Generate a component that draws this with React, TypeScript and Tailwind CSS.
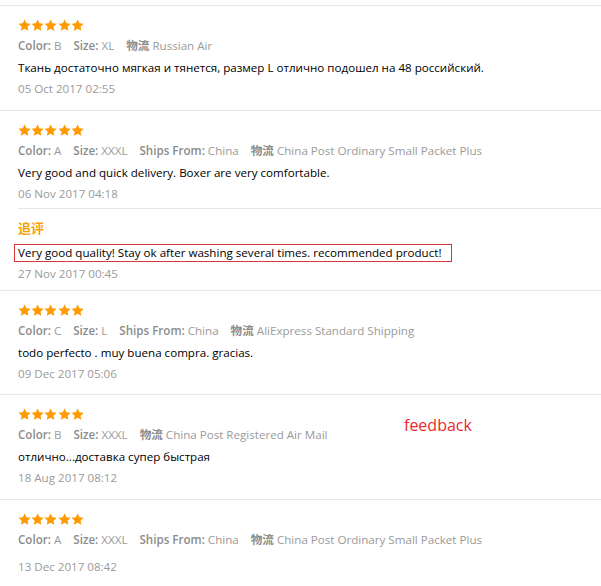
import React from "react";

const Star = () => (
  <svg width="13.2" height="13" viewBox="0 0 24 24" className="block">
    <path
      d="M12 0.8l3.4 7.1 7.8.9-5.8 5.3 1.6 7.8L12 18.1l-7 3.8 1.6-7.8L.8 8.8l7.8-.9z"
      fill="#ff9a00"
    />
  </svg>
);

const Stars = () => (
  <div className="flex h-[13px] items-center">
    <Star />
    <Star />
    <Star />
    <Star />
    <Star />
  </div>
);

type Meta = { label: string; value: string };

const MetaLine = ({ items }: { items: Meta[] }) => (
  <div className="mt-[3px] flex leading-[21px] text-[11.6px]">
    {items.map((m, i) => (
      <span key={i} className="mr-[12px] whitespace-nowrap">
        <span className="font-semibold text-[#8c8c8c]">{m.label}</span>
        <span className="text-[#9a9a9a]"> {m.value}</span>
      </span>
    ))}
  </div>
);

const Comment = ({ text }: { text: string }) => (
  <div className="mt-px leading-[21px] text-[11.6px] text-black">{text}</div>
);

const DateLine = ({ text, className = "" }: { text: string; className?: string }) => (
  <div className={"leading-[21px] text-[11.6px] text-[#9a9a9a] " + className}>{text}</div>
);

export default function App() {
  return (
    <div
      className="w-[601px] h-[586px] overflow-hidden bg-white"
      style={{ fontFamily: '"Open Sans", "Noto Sans CJK SC", sans-serif' }}
    >
      <div className="h-[5px]" />
      {/* Review 1 */}
      <div className="border-t border-[#e6e6e6] pl-[18px] pt-[13px] pb-[11px]">
        <Stars />
        <MetaLine
          items={[
            { label: "Color:", value: "B" },
            { label: "Size:", value: "XL" },
            { label: "物流", value: "Russian Air" },
          ]}
        />
        <Comment text="Ткань достаточно мягкая и тянется, размер L отлично подошел на 48 российский." />
        <DateLine text="05 Oct 2017 02:55" />
      </div>
      {/* Review 2 */}
      <div className="border-t border-[#e6e6e6]">
        <div className="pl-[18px] pt-[13px] pb-[4px]">
          <Stars />
          <MetaLine
            items={[
              { label: "Color:", value: "A" },
              { label: "Size:", value: "XXXL" },
              { label: "Ships From:", value: "China" },
              { label: "物流", value: "China Post Ordinary Small Packet Plus" },
            ]}
          />
          <Comment text="Very good and quick delivery. Boxer are very comfortable." />
          <DateLine text="06 Nov 2017 04:18" />
        </div>
        <div className="ml-[18px] border-t border-[#e6e6e6] pt-[9px] pb-[6px]">
          <div className="leading-[21px] text-[13px] font-bold text-[#f5a100]">追评</div>
          <div className="mt-[4px] -ml-[4px] inline-block border border-[#d9363e] pl-[3px] pr-[10px] leading-[16px] text-[11.6px] text-black">
            Very good quality! Stay ok after washing several times. recommended product!
          </div>
          <DateLine text="27 Nov 2017 00:45" />
        </div>
      </div>
      {/* Review 3 */}
      <div className="border-t border-[#e6e6e6] pl-[18px] pt-[13px] pb-[10px]">
        <Stars />
        <MetaLine
          items={[
            { label: "Color:", value: "C" },
            { label: "Size:", value: "L" },
            { label: "Ships From:", value: "China" },
            { label: "物流", value: "AliExpress Standard Shipping" },
          ]}
        />
        <Comment text="todo perfecto . muy buena compra. gracias." />
        <DateLine text="09 Dec 2017 05:06" />
      </div>
      {/* Review 4 */}
      <div className="relative border-t border-[#e6e6e6] pl-[18px] pt-[13px] pb-[11px]">
        <Stars />
        <MetaLine
          items={[
            { label: "Color:", value: "B" },
            { label: "Size:", value: "XXXL" },
            { label: "物流", value: "China Post Registered Air Mail" },
          ]}
        />
        <Comment text="отлично...доставка супер быстрая" />
        <DateLine text="18 Aug 2017 08:12" />
        <div className="absolute left-[404px] top-[19px] text-[16px] leading-[22px] text-[#e8282f]">
          feedback
        </div>
      </div>
      {/* Review 5 */}
      <div className="border-t border-[#e6e6e6] pl-[18px] pt-[13px] pb-[11px]">
        <Stars />
        <MetaLine
          items={[
            { label: "Color:", value: "A" },
            { label: "Size:", value: "XXXL" },
            { label: "Ships From:", value: "China" },
            { label: "物流", value: "China Post Ordinary Small Packet Plus" },
          ]}
        />
        <DateLine text="13 Dec 2017 08:42" className="mt-[6px]" />
      </div>
    </div>
  );
}
